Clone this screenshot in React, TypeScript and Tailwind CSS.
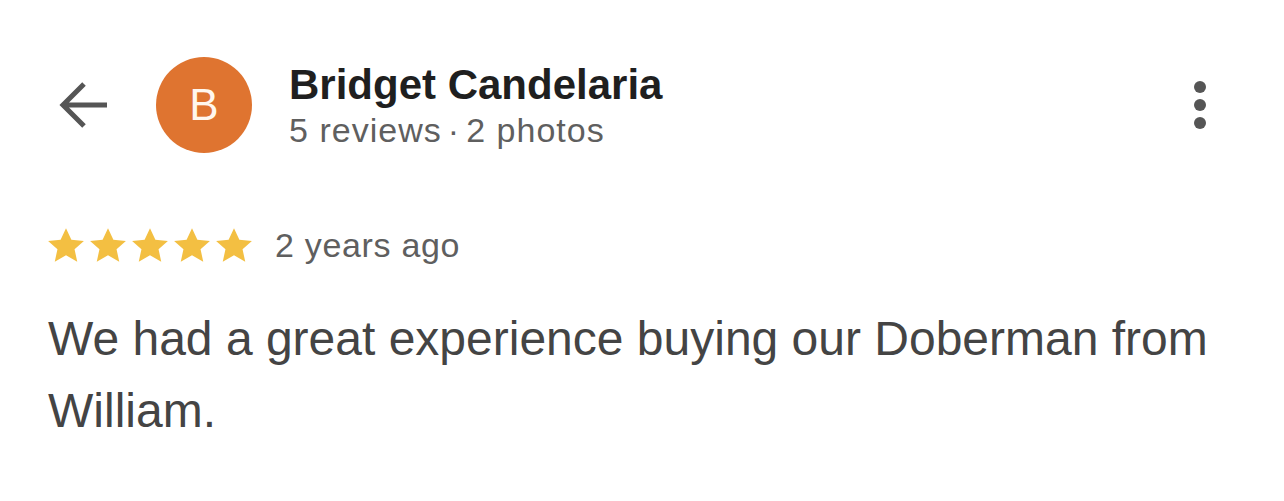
import React from 'react';

function BackArrow() {
  return (
    <svg width="50" height="48" viewBox="0 0 50 48" fill="none" className="shrink-0">
      <path d="M48 24H4M25 3L4 24l21 21" stroke="#555555" strokeWidth="5" />
    </svg>
  );
}

function Star() {
  return (
    <svg width="38" height="37" viewBox="0 0 24 23" className="shrink-0">
      <path
        d="M12 0.6l3.4 7.2 7.9 0.8-5.9 5.3 1.7 7.8L12 17.7l-7.1 4 1.7-7.8L0.7 8.6l7.9-0.8z"
        fill="#f3bf42"
      />
    </svg>
  );
}

export default function App() {
  return (
    <div
      className="w-[1284px] h-[501px] bg-white overflow-hidden"
      style={{ fontFamily: '"Liberation Sans", Arial, sans-serif' }}
    >
      {/* Header */}
      <div className="flex items-center pl-[59px] pr-[78px] pt-[57px]">
        <BackArrow />
        <div className="ml-[47px] w-[96px] h-[96px] rounded-full bg-[#df7430] flex items-center justify-center shrink-0">
          <span className="text-[44px] leading-none text-[#fff7ee]">B</span>
        </div>
        <div className="ml-[37px] flex flex-col gap-[1px] flex-1">
          <div className="text-[42px] leading-[48px] font-bold text-[#1f1f1f]">Bridget Candelaria</div>
          <div className="text-[34px] leading-[40px] tracking-[0.03em] text-[#5f5f5f]">
            5 reviews<span className="mx-[6px]">·</span>2 photos
          </div>
        </div>
        <div className="flex flex-col items-center gap-[6px] self-start mt-[24px]">
          <span className="w-[12px] h-[12px] rounded-full bg-[#555555]" />
          <span className="w-[12px] h-[12px] rounded-full bg-[#555555]" />
          <span className="w-[12px] h-[12px] rounded-full bg-[#555555]" />
        </div>
      </div>

      {/* Rating */}
      <div className="flex items-center pl-[47px] mt-[72px]">
        <div className="flex gap-[4px]">
          <Star />
          <Star />
          <Star />
          <Star />
          <Star />
        </div>
        <span className="ml-[22px] text-[34px] leading-[40px] tracking-[0.02em] text-[#5f5f5f]">2 years ago</span>
      </div>

      {/* Review */}
      <p className="pl-[48px] pr-[60px] mt-[38px] text-[48px] leading-[72px] text-[#444444]">
        We had a great experience buying our Doberman from William.
      </p>
    </div>
  );
}
